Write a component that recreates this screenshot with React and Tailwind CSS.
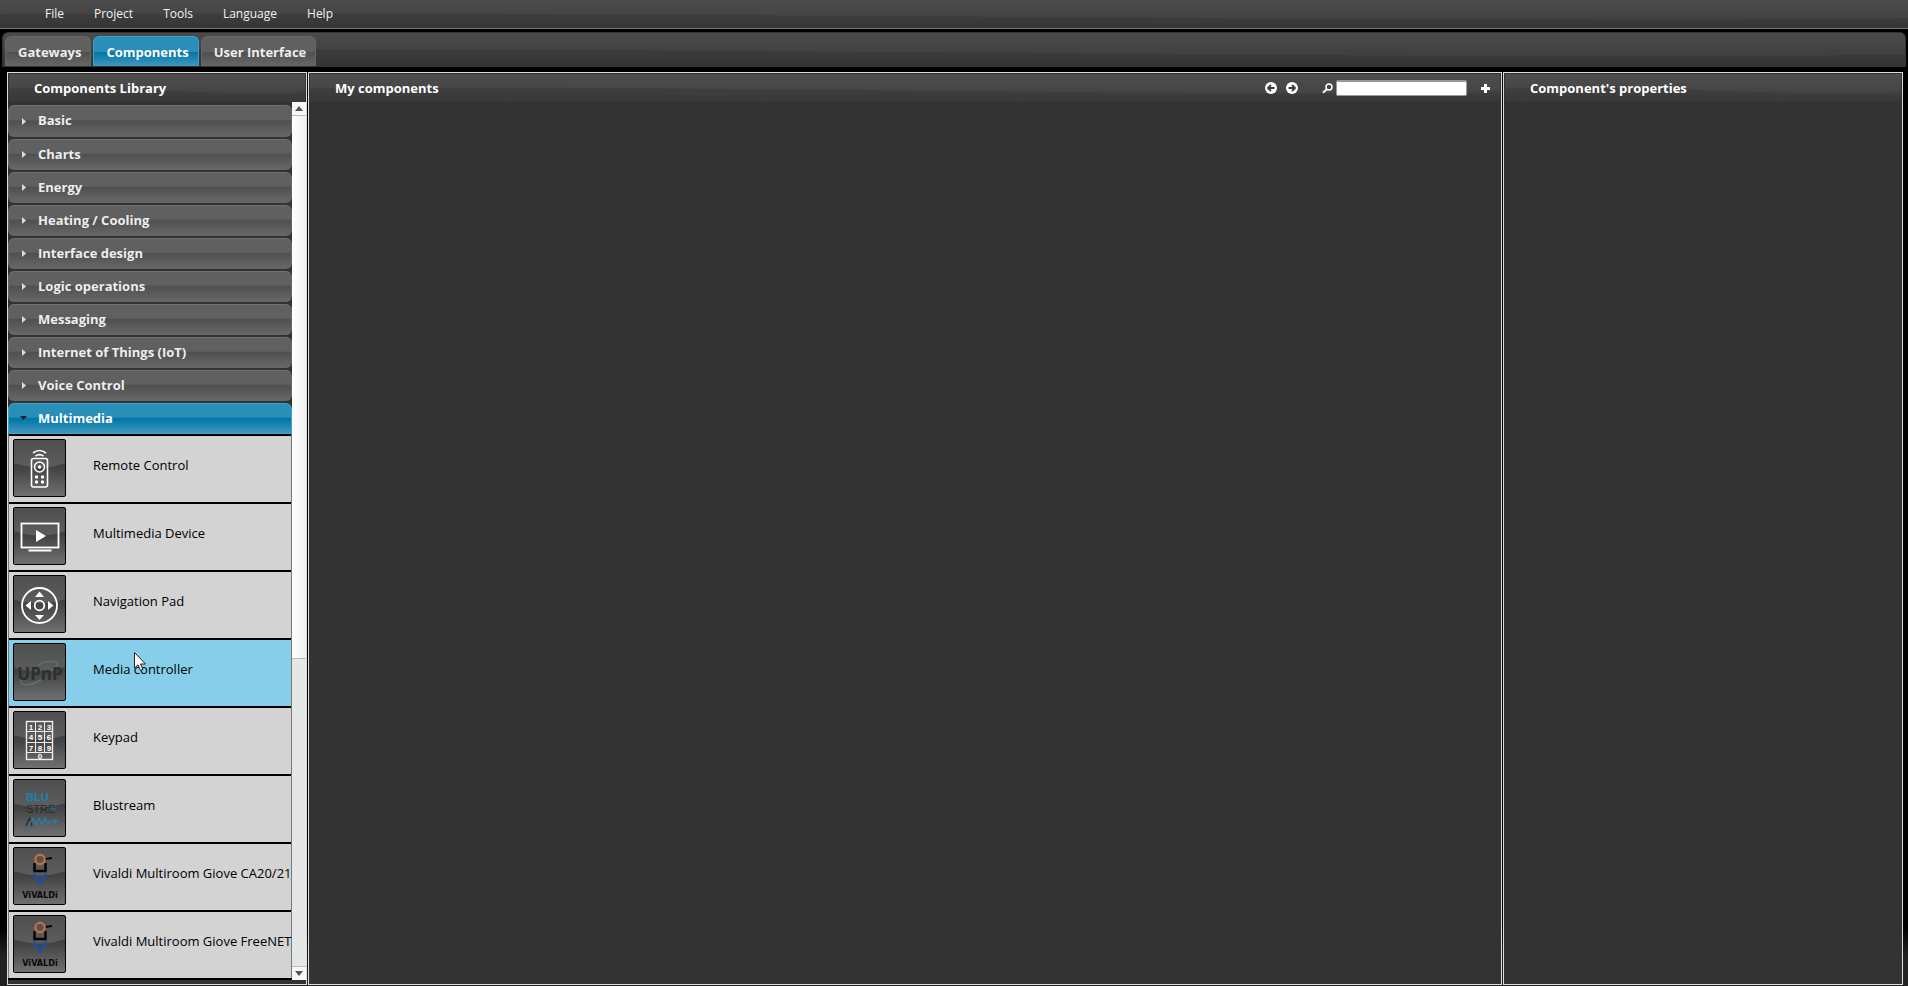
import React, { useState } from "react";

const menus = ["File", "Project", "Tools", "Language", "Help"];
const tabs = ["Gateways", "Components", "User Interface"];

const categories = [
  "Basic",
  "Charts",
  "Energy",
  "Heating / Cooling",
  "Interface design",
  "Logic operations",
  "Messaging",
  "Internet of Things (IoT)",
  "Voice Control",
  "Multimedia",
];

const RemoteIcon = () => (
  <g fill="none" stroke="#fff" strokeWidth="1.6">
    <path d="M20 14Q26.500 9 33 14M22.500 17Q26.500 14.200 30.500 17" />
    <rect x="18.5" y="19.500" width="16" height="28.500" rx="2" />
    <circle cx="26.5" cy="28" r="5" />
    <g fill="#fff" stroke="none">
      <circle cx="26.5" cy="28" r="1.8" />
      <circle cx="23.5" cy="38" r="1.7" />
      <circle cx="29.5" cy="38" r="1.7" />
      <circle cx="23.5" cy="43" r="1.7" />
      <circle cx="29.5" cy="43" r="1.7" />
    </g>
  </g>
);

const ScreenIcon = () => (
  <g fill="none" stroke="#fff" strokeWidth="1.8">
    <rect x="8.5" y="16.5" width="37" height="24" />
    <path d="M15.500 43.500H38.500" />
    <path d="M23 23V35L33 29Z" fill="#fff" stroke="none" />
  </g>
);

const PadIcon = () => (
  <g fill="none" stroke="#fff" strokeWidth="1.8">
    <circle cx="26.500" cy="30.500" r="17.500" />
    <circle cx="26.500" cy="30.500" r="4.800" />
    <g fill="#fff" stroke="none">
      <path d="M22 22h9l-4.500-5.500zM22 40h9l-4.500 5zM18 26v9l-5.500-4.500zM35 26v9l5.500-4.500z" />
    </g>
  </g>
);

const UpnpIcon = () => (
  <g>
    <path
      d="M25 22C33 17 44 17 44 21Q44 24 38 28M9 36C4 44 17 43 28 37"
      fill="none"
      stroke="#5d7560"
      strokeWidth="1.5"
    />
    <text x="27" y="37" textAnchor="middle" fontSize="17" fontWeight="700" fill="#2c302e">
      UPnP
    </text>
  </g>
);

const KeypadIcon = () => (
  <g fill="none" stroke="#eee" strokeWidth="1">
    <rect x="13.500" y="10.500" width="26" height="38" strokeWidth="1.400" />
    <path d="M22.500 10.500V41M31.500 10.500V41M13.500 20.500H39.500M13.500 31.500H39.500M13.500 41.500H39.500" />
    <g
      fill="#fff"
      stroke="none"
      fontSize="8"
      fontWeight="700"
      textAnchor="middle"
      className="font-['Liberation_Sans',sans-serif]"
    >
      {[1, 2, 3, 4, 5, 6, 7, 8, 9].map((n, i) => (
        <text key={n} x={18 + (i % 3) * 9} y={18.5 + Math.floor(i / 3) * 10.5}>
          {n}
        </text>
      ))}
      <text x="27" y="48">0</text>
    </g>
  </g>
);

const BlustreamIcon = () => (
  <g className="font-['Liberation_Sans',sans-serif]">
    <text x="13" y="22" fontSize="11" fontWeight="700" fill="#1b82b5">BLU</text>
    <text x="13" y="34" fontSize="11" fill="#26282a">STRE</text>
    <path d="M36 30H43" stroke="#2381b4" />
    <path d="M13 47L16.500 39L19 47" fill="none" stroke="#26282a" strokeWidth="1.2" />
    <path
      d="M17 44L20 39L23 46L26 39L29 46L32 39L35 45L37 42H44M41 40.500L44 42L41 44"
      fill="none"
      stroke="#2381b4"
      strokeWidth="1.200"
    />
  </g>
);

const VivaldiIcon = () => (
  <g>
    <path d="M21.500 16V24H32.500V16" fill="none" stroke="#050505" strokeWidth="2.500" />
    <path d="M32 11L39 10V12L32 13Z" fill="#050505" />
    <circle cx="27" cy="12.500" r="4.700" fill="none" stroke="#c8743a" strokeWidth="2" />
    <path d="M21 26L27 34L33 26V30L27 38L21 30Z" fill="#1f4f9a" stroke="#1f4f9a" />
    <text
      x="27"
      y="51"
      textAnchor="middle"
      fontSize="9"
      fontWeight="700"
      fill="#080808"
      className="font-['Liberation_Sans_Narrow','DejaVu_Sans_Condensed',sans-serif]"
    >
      ViVALDi
    </text>
  </g>
);

const components = [
  { name: "Remote Control", Icon: RemoteIcon },
  { name: "Multimedia Device", Icon: ScreenIcon },
  { name: "Navigation Pad", Icon: PadIcon },
  { name: "Media controller", Icon: UpnpIcon },
  { name: "Keypad", Icon: KeypadIcon },
  { name: "Blustream", Icon: BlustreamIcon },
  { name: "Vivaldi Multiroom Giove CA20/21", Icon: VivaldiIcon },
  { name: "Vivaldi Multiroom Giove FreeNET", Icon: VivaldiIcon },
];

const Tile = ({ children }) => (
  <span className="h-[58px] w-[53px] shrink-0 overflow-hidden rounded-xs border border-black bg-[linear-gradient(#333_0%,#434343_50%,#707072_100%)]">
    <svg viewBox="1 1 51 56" className="h-full w-full font-['Open_Sans',sans-serif]" aria-hidden="true">
      <path d="M0 0H53V24Q26 33 0 24Z" fill="#fff" fillOpacity="0.14" />
      {children}
    </svg>
  </span>
);

/* Faint wave that crosses every dark title bar */
const Wave = () => (
  <svg
    className="absolute inset-0 h-full w-full"
    viewBox="0 0 100 28"
    preserveAspectRatio="none"
    aria-hidden="true"
  >
    <path d="M0 14C30 12 55 18 75 19S95 19 100 18V28H0Z" fill="#000" fillOpacity="0.1" />
  </svg>
);

const Panel = ({ title, className, tools, children }) => (
  <section className={`flex min-h-0 flex-col border border-[#dddddd] bg-[#333333] ${className}`}>
    <header className="relative flex h-[29px] shrink-0 items-center border border-b-0 border-[#333333] bg-linear-to-b from-[#4e4e4e] to-[#3f3f3f] pl-[25px]">
      <Wave />
      <h2 className="relative pt-[2px] text-[13px] font-bold text-white">{title}</h2>
      {tools}
    </header>
    {children}
  </section>
);

const Tools = () => (
  <div className="relative ml-auto flex items-center pr-[10px]">
    <button type="button" aria-label="Previous" className="mr-[9px]">
      <svg width="12" height="12" viewBox="0 0 12 12">
        <circle cx="6" cy="6" r="6" fill="#fff" />
        <path d="M9.500 6H3.500M6 3L3 6L6 9" fill="none" stroke="#3c3c3c" strokeWidth="1.800" />
      </svg>
    </button>
    <button type="button" aria-label="Next" className="mr-6">
      <svg width="12" height="12" viewBox="0 0 12 12">
        <circle cx="6" cy="6" r="6" fill="#fff" />
        <path d="M2.500 6H8.500M6 3L9 6L6 9" fill="none" stroke="#3c3c3c" strokeWidth="1.800" />
      </svg>
    </button>
    <label htmlFor="search" aria-label="Search" className="mr-[3px]">
      <svg width="11" height="11" viewBox="0 0 11 11" fill="none" stroke="#fff">
        <circle cx="7" cy="4" r="3" strokeWidth="1.500" />
        <path d="M4.800 6.200L1 9.800" strokeWidth="2" />
      </svg>
    </label>
    <input
      id="search"
      type="text"
      className="h-4 w-[131px] rounded-xs border border-t-2 border-[#999999] bg-white px-1 text-xs text-black"
    />
    <button type="button" aria-label="Add component" className="ml-[14px]">
      <svg width="9" height="9" viewBox="0 0 9 9">
        <path d="M4.500 0V9M0 4.500H9" stroke="#fff" strokeWidth="3" />
      </svg>
    </button>
  </div>
);

const Category = ({ name, open }) => (
  <button
    type="button"
    aria-expanded={open}
    className={
      open
        ? "flex h-[31px] w-full shrink-0 items-center rounded-t-md border border-[#3ba3cc] bg-[linear-gradient(#2a8fb8_0%,#2a8fb8_45%,#0076a6_50%,#3f97bd_100%)] pl-[10px] text-[13px] font-bold text-white"
        : "flex h-[31px] w-full shrink-0 items-center rounded-md border border-t-[#717171] border-[#666666] bg-[linear-gradient(#606060_0%,#606060_45%,#505050_50%,#676767_100%)] pl-[10px] text-[13px] font-bold text-[#eeeeee] first:h-8"
    }
  >
    <svg width="9" height="9" viewBox="0 0 9 9" className="mr-[10px]" aria-hidden="true">
      {open ? <path d="M1 2H8L4.500 6Z" fill="#222" /> : <path d="M3 1V8L7 4.500Z" fill="#ddd" />}
    </svg>
    {name}
  </button>
);

const ScrollBar = () => (
  <div className="flex w-[14px] shrink-0 flex-col bg-[#e5e7e7]" aria-hidden="true">
    <div className="flex h-[14px] items-center justify-center border-b border-[#bbbbbb] bg-[#f7f7f7]">
      <svg width="8" height="5" viewBox="0 0 8 5">
        <path d="M0 5L4 0L8 5Z" fill="#555" />
      </svg>
    </div>
    <div className="h-[543px] border-b border-[#bbbbbb] bg-linear-to-r from-white to-[#eeeeee]" />
    <div className="mt-auto flex h-[14px] items-center justify-center border-t border-[#bbbbbb] bg-[#f7f7f7]">
      <svg width="8" height="5" viewBox="0 0 8 5">
        <path d="M0 0L4 5L8 0Z" fill="#555" />
      </svg>
    </div>
  </div>
);

const App = () => {
  const [hovered, setHovered] = useState("Media controller");

  return (
    <div className="flex h-screen flex-col bg-[linear-gradient(#000_0%,#000_94%,#222_97%,#222_100%)] font-['Open_Sans',sans-serif] text-[13px]">
      <nav className="relative h-[29px] shrink-0 border-b border-[#777777] bg-linear-to-b from-[#4c4c4c] to-[#3d3d3d]">
        <Wave />
        <div className="relative flex h-full items-center gap-[30px] pl-[45px]">
          {menus.map((menu) => (
            <button key={menu} type="button" className="text-[12px] text-[#f2f2f2]">
              {menu}
            </button>
          ))}
        </div>
      </nav>

      <div className="relative mx-[2px] mt-[3px] h-[35px] shrink-0 rounded-t-md border border-[#333333] bg-linear-to-b from-[#4a4a4a] to-[#3c3c3c]">
        <Wave />
        <div role="tablist" className="relative flex h-full items-end gap-[2px] pl-[2px]">
          {tabs.map((tab) => (
            <button
              key={tab}
              type="button"
              role="tab"
              aria-selected={tab === "Components"}
              className={
                tab === "Components"
                  ? "h-[30px] rounded-t-md border border-b-0 border-[#3ba3cc] bg-[linear-gradient(#2a8fb8_0%,#2a8fb8_50%,#0076a6_52%,#3f97bd_100%)] pt-[2px] pr-[9px] pl-3 text-[13px] font-bold text-white"
                  : "h-[30px] rounded-t-md border border-b-0 border-[#666666] bg-[linear-gradient(#606060_0%,#606060_50%,#505050_52%,#676767_100%)] pt-[2px] pr-[9px] pl-3 text-[13px] font-bold text-[#eeeeee]"
              }
            >
              {tab}
            </button>
          ))}
        </div>
      </div>

      <main className="mt-[5px] mr-[5px] mb-px ml-[7px] flex min-h-0 flex-1 gap-px">
        <Panel title="Components Library" className="w-[300px] shrink-0">
          <div className="mb-1 flex min-h-0 flex-1">
            <div className="min-w-0 flex-1 overflow-hidden">
              <div className="flex flex-col gap-[2px] pt-[3px]">
                {categories.map((name) => (
                  <Category key={name} name={name} open={name === "Multimedia"} />
                ))}
              </div>
              <ul className="border-x border-[#777777]">
                {components.map(({ name, Icon }) => (
                  <li
                    key={name}
                    onMouseEnter={() => setHovered(name)}
                    className={
                      name === hovered
                        ? "flex h-[68px] items-start border-t-2 border-black bg-[#87ceeb] pt-[3px] pl-1 text-black"
                        : "flex h-[68px] items-start border-t-2 border-black bg-[#d3d3d3] pt-[3px] pl-1 text-black"
                    }
                  >
                    <Tile>
                      <Icon />
                    </Tile>
                    <span className="ml-[27px] pt-4 text-[13px] leading-5 whitespace-nowrap">
                      {name}
                    </span>
                  </li>
                ))}
              </ul>
              <div className="h-[2px] bg-black" />
            </div>
            <ScrollBar />
          </div>
        </Panel>

        <Panel title="My components" className="min-w-0 flex-1" tools={<Tools />} />

        <Panel title="Component's properties" className="w-[400px] shrink-0" />
      </main>

      {/* Mouse pointer */}
      <svg
        className="pointer-events-none absolute top-[652px] left-[134px]"
        width="13"
        height="20"
        viewBox="0 0 13 20"
        aria-hidden="true"
      >
        <path
          d="M0.500 0.500V16L4 12.800L6.500 18.500L9 17.400L6.500 12H11.500Z"
          fill="#fff"
          stroke="#222"
        />
      </svg>
    </div>
  );
};

export default App;
